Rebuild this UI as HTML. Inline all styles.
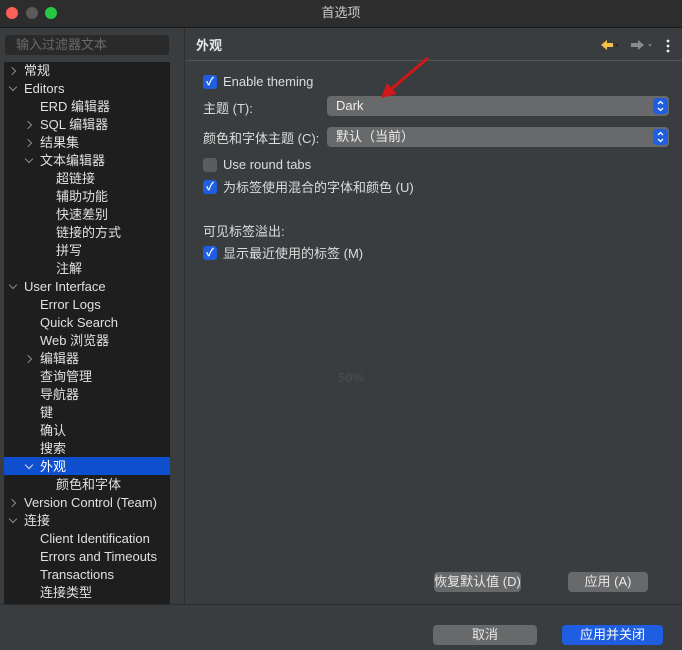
<!DOCTYPE html>
<html><head><meta charset="utf-8"><style>
*{margin:0;padding:0;box-sizing:border-box}
body{width:682px;height:650px;background:#3a3d3f;font-family:"Liberation Sans","Noto Sans CJK SC",sans-serif;font-size:13px;color:#dcdcdc;position:relative;overflow:hidden}
.abs{position:absolute;line-height:16px}
.title{left:0;top:0;width:682px;height:28px;background:#2d2d2d;border-bottom:1px solid #1a1a1a;text-align:center;line-height:26px;color:#c8c8c8;font-size:13px}
.dot{top:7px;width:12px;height:12px;border-radius:50%}
.filter{left:5px;top:35px;width:164px;height:20px;background:#2a2a2a;border-radius:3px;color:#6a6a6a;padding-left:11px;line-height:20px}
.tree{left:4px;top:62px;width:166px;height:542px;background:#1e1e1e}
.row{position:absolute;height:18px;line-height:18px;white-space:nowrap;color:#e0e0e0}
.sel{background:#0d4fce}
.arr{position:absolute;width:6px;height:6px;border-right:1.3px solid #8a8a8a;border-bottom:1.3px solid #8a8a8a}
.r{transform:rotate(-45deg)}
.d{transform:rotate(45deg)}
.right{left:184px;top:28px;width:498px;height:577px;border-left:1px solid #2e2e2e}
.hdr{left:196px;top:38px;font-weight:bold;color:#e6e6e6}
.cb{width:14px;height:14px;border-radius:3px;background:#1f5ee0;color:#fff;font-size:11px;line-height:14px;text-align:center;font-weight:bold}
.cbo{background:#5a5c5e}
.sel2{left:327px;height:20px;width:342px;background:#67696b;border-radius:4px;line-height:20px;padding-left:9px;color:#eee}
.spin{position:absolute;right:1px;top:2px;width:15px;height:16px;border-radius:4px;background:#1f5ee0}
.btn{height:20px;background:#67696b;border-radius:4px;text-align:center;line-height:20px;color:#e8e8e8}
</style></head><body>
<div class="abs title">首选项</div>
<div class="abs dot" style="left:6px;background:#fe5f57"></div>
<div class="abs dot" style="left:26px;background:#5a5a5a"></div>
<div class="abs dot" style="left:45px;background:#28c840"></div>
<div class="abs filter">输入过滤器文本</div>
<div class="abs tree">
<div class="row sel" style="top:395px;left:0;width:166px"></div>
<span class="arr r" style="left:5px;top:6px"></span><div class="row" style="left:20px;top:0">常规</div>
<span class="arr d" style="left:6px;top:22px"></span><div class="row" style="left:20px;top:18px">Editors</div>
<div class="row" style="left:36px;top:36px">ERD 编辑器</div>
<span class="arr r" style="left:21px;top:60px"></span><div class="row" style="left:36px;top:54px">SQL 编辑器</div>
<span class="arr r" style="left:21px;top:78px"></span><div class="row" style="left:36px;top:72px">结果集</div>
<span class="arr d" style="left:22px;top:94px"></span><div class="row" style="left:36px;top:90px">文本编辑器</div>
<div class="row" style="left:52px;top:108px">超链接</div>
<div class="row" style="left:52px;top:126px">辅助功能</div>
<div class="row" style="left:52px;top:144px">快速差别</div>
<div class="row" style="left:52px;top:162px">链接的方式</div>
<div class="row" style="left:52px;top:180px">拼写</div>
<div class="row" style="left:52px;top:198px">注解</div>
<span class="arr d" style="left:6px;top:220px"></span><div class="row" style="left:20px;top:216px">User Interface</div>
<div class="row" style="left:36px;top:234px">Error Logs</div>
<div class="row" style="left:36px;top:252px">Quick Search</div>
<div class="row" style="left:36px;top:270px">Web 浏览器</div>
<span class="arr r" style="left:21px;top:294px"></span><div class="row" style="left:36px;top:288px">编辑器</div>
<div class="row" style="left:36px;top:306px">查询管理</div>
<div class="row" style="left:36px;top:324px">导航器</div>
<div class="row" style="left:36px;top:342px">键</div>
<div class="row" style="left:36px;top:360px">确认</div>
<div class="row" style="left:36px;top:378px">搜索</div>
<span class="arr d" style="left:22px;top:400px;border-color:#ddd"></span><div class="row" style="left:36px;top:396px;color:#fff">外观</div>
<div class="row" style="left:52px;top:414px">颜色和字体</div>
<span class="arr r" style="left:5px;top:438px"></span><div class="row" style="left:20px;top:432px">Version Control (Team)</div>
<span class="arr d" style="left:6px;top:454px"></span><div class="row" style="left:20px;top:450px">连接</div>
<div class="row" style="left:36px;top:468px">Client Identification</div>
<div class="row" style="left:36px;top:486px">Errors and Timeouts</div>
<div class="row" style="left:36px;top:504px">Transactions</div>
<div class="row" style="left:36px;top:522px">连接类型</div>
</div>
<div class="abs right"></div>
<div class="abs hdr">外观</div>
<div class="abs" style="left:185px;top:60px;width:497px;height:1px;background:#555"></div>
<svg class="abs" style="left:598px;top:38px" width="75" height="16"><path d="M3 7 L9 2 V5 H15 V9 H9 V12 Z" fill="#f2c14e"/><path d="M17 6 l4 0 l-2 3z" fill="#222"/><path d="M46 7 L40 2 V5 H33 V9 H40 V12 Z" fill="#8a8a8a"/><path d="M50 6 l4 0 l-2 3z" fill="#777"/><circle cx="70" cy="3" r="1.4" fill="#eee"/><circle cx="70" cy="8" r="1.4" fill="#eee"/><circle cx="70" cy="13" r="1.4" fill="#eee"/></svg>
<div class="abs cb" style="left:203px;top:75px">✓</div><div class="abs" style="left:223px;top:74px">Enable theming</div>
<div class="abs" style="left:203px;top:101px">主题 (T):</div>
<div class="abs sel2" style="top:96px">Dark<div class="spin"><svg width="15" height="16"><path d="M5 6 L7.5 3.5 L10 6 M5 10 L7.5 12.5 L10 10" stroke="#fff" stroke-width="1.3" fill="none"/></svg></div></div>
<div class="abs" style="left:203px;top:131px">颜色和字体主题 (C):</div>
<div class="abs sel2" style="top:127px">默认（当前）<div class="spin"><svg width="15" height="16"><path d="M5 6 L7.5 3.5 L10 6 M5 10 L7.5 12.5 L10 10" stroke="#fff" stroke-width="1.3" fill="none"/></svg></div></div>
<div class="abs cb cbo" style="left:203px;top:158px"></div><div class="abs" style="left:223px;top:157px">Use round tabs</div>
<div class="abs cb" style="left:203px;top:180px">✓</div><div class="abs" style="left:223px;top:180px">为标签使用混合的字体和颜色 (U)</div>
<div class="abs" style="left:203px;top:224px">可见标签溢出:</div>
<div class="abs cb" style="left:203px;top:246px">✓</div><div class="abs" style="left:223px;top:246px">显示最近使用的标签 (M)</div>
<svg class="abs" style="left:375px;top:55px" width="60" height="50"><line x1="53" y1="3" x2="14" y2="36" stroke="#d01818" stroke-width="3"/><path d="M6 43 L12 28 L22 39 Z" fill="#d01818"/></svg>
<div class="abs" style="left:338px;top:370px;color:#46494b;font-weight:bold">50%</div>
<div class="abs btn" style="left:434px;top:572px;width:87px;line-height:20px">恢复默认值 (D)</div>
<div class="abs btn" style="left:568px;top:572px;width:80px;line-height:20px">应用 (A)</div>
<div class="abs" style="left:0;top:604px;width:682px;height:1px;background:#2e2e2e"></div>
<div class="abs" style="left:0;top:605px;width:682px;height:45px;background:#3a3d3f"></div>
<div class="abs btn" style="left:433px;top:625px;width:104px;line-height:20px">取消</div>
<div class="abs btn" style="left:562px;top:625px;width:101px;line-height:20px;background:#1f5ee0;color:#fff">应用并关闭</div>
</body></html>
